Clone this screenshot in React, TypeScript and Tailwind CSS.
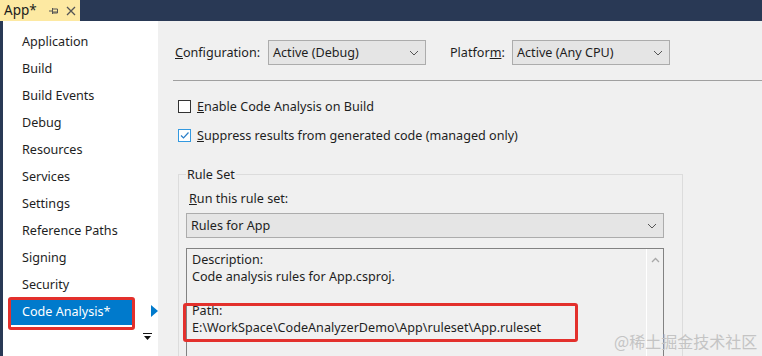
import React from "react";

const navItems = [
  "Application",
  "Build",
  "Build Events",
  "Debug",
  "Resources",
  "Services",
  "Settings",
  "Reference Paths",
  "Signing",
  "Security",
  "Code Analysis*",
];

const Chevron = () => (
  <svg width="10" height="6" viewBox="0 0 10 6" className="shrink-0">
    <path d="M1 1 L5 5 L9 1" fill="none" stroke="#555" strokeWidth="1" />
  </svg>
);

const Dropdown = ({ value, width }: { value: string; width: string }) => (
  <div className={`${width} h-[25px] flex items-center justify-between pl-[4px] pr-[6px] bg-[#e5e5e5] border border-[#acacac] text-[#1e1e1e]`}>
    <span>{value}</span>
    <Chevron />
  </div>
);

const Checkbox = ({ checked }: { checked?: boolean }) =>
  checked ? (
    <div className="w-[13px] h-[13px] border border-[#3399e0] bg-white flex items-center justify-center">
      <svg width="11" height="11" viewBox="0 0 11 11">
        <path d="M2 5.5 L4.5 8 L9.5 2.5" fill="none" stroke="#2a7fc9" strokeWidth="1.2" />
      </svg>
    </div>
  ) : (
    <div className="w-[13px] h-[13px] border border-[#333] bg-white" />
  );

export default function App() {
  return (
    <div className="relative w-[762px] h-[356px] overflow-hidden flex flex-col bg-[#f0f0f0] text-[12.6px] leading-[17px] text-[#1e1e1e] font-['Noto_Sans','Noto_Sans_CJK_SC',sans-serif]">
      {/* document tab bar */}
      <div className="h-[21px] bg-[#293955] flex shrink-0">
        <div className="w-[80px] bg-[#fde9a2] flex items-center pl-[4px] text-[#1b1b1b]">
          <span className="text-[13.5px]">App*</span>
          <svg width="10" height="8" viewBox="0 0 10 8" className="ml-[12px]">
            <path d="M0 4 H3 M3.5 1 V7 M3.5 2 H8.5 V6 H3.5 M3.5 5 H8.5" fill="none" stroke="#555" strokeWidth="1" />
          </svg>
          <svg width="10" height="10" viewBox="0 0 10 10" className="ml-[7px]">
            <path d="M1 1 L9 9 M9 1 L1 9" fill="none" stroke="#555" strokeWidth="1.3" />
          </svg>
        </div>
      </div>

      <div className="flex flex-1">
        {/* sidebar */}
        <div className="relative w-[158px] bg-white border-l-[3px] border-[#293955] pt-[7px] flex flex-col">
          {navItems.map((item) => {
            const selected = item === "Code Analysis*";
            return (
              <div key={item} className="relative h-[27px] ml-[7px] flex items-center">
                <div
                  className={
                    selected
                      ? "w-[122px] h-full flex items-center pl-[12px] bg-[#007acc] text-white"
                      : "pl-[12px]"
                  }
                >
                  {item}
                </div>
                {selected && (
                  <svg width="7" height="12" viewBox="0 0 7 12" className="absolute right-0 top-[7px]">
                    <path d="M0 0 L7 6 L0 12 Z" fill="#007acc" />
                  </svg>
                )}
              </div>
            );
          })}
          <svg width="9" height="8" viewBox="0 0 9 8" className="absolute left-[140px] top-[312px]">
            <path d="M0 0.5 H9" stroke="#111" strokeWidth="1" />
            <path d="M1 3 H8 L4.5 7 Z" fill="#111" />
          </svg>
        </div>

        {/* main panel */}
        <div className="flex-1 pt-[19px] pl-[15px]">
          <div className="flex items-center pl-[2px]">
            <span className="w-[93px]">
              <u>C</u>onfiguration:
            </span>
            <Dropdown value="Active (Debug)" width="w-[158px]" />
            <span className="ml-[24px] w-[62px]">
              Platfor<u>m</u>:
            </span>
            <Dropdown value="Active (Any CPU)" width="w-[158px]" />
          </div>

          <div className="mt-[15px] border-t border-[#a0a0a0]" />

          <div className="mt-[17px] flex items-center pl-[5px] gap-[6px]">
            <Checkbox />
            <span>
              <u>E</u>nable Code Analysis on Build
            </span>
          </div>
          <div className="mt-[12px] flex items-center pl-[5px] gap-[6px]">
            <Checkbox checked />
            <span>
              <u>S</u>uppress results from generated code (managed only)
            </span>
          </div>

          <fieldset className="mt-[22px] ml-[5px] w-[505px] h-[200px] border border-[#dcdcdc] px-[7px]">
            <legend className="px-[1px] leading-[17px]">Rule Set</legend>
            <div className="mt-[7px] pl-[3px]">
              <u>R</u>un this rule set:
            </div>
            <div className="mt-[6px]">
              <Dropdown value="Rules for App" width="w-[478px]" />
            </div>
            <div className="mt-[10px] w-[478px] h-[120px] border border-[#828282] flex">
              <div className="flex-1 pl-[5px] pt-[2px]">
                <div>Description:</div>
                <div>Code analysis rules for App.csproj.</div>
                <div className="h-[17px]" />
                <div>Path:</div>
                <div>E:\WorkSpace\CodeAnalyzerDemo\App\ruleset\App.ruleset</div>
              </div>
              <div className="w-[17px] border-l border-white flex justify-center pt-[8px]">
                <svg width="9" height="6" viewBox="0 0 9 6">
                  <path d="M1 5 L4.5 1.5 L8 5" fill="none" stroke="#a8a8a8" strokeWidth="1.3" />
                </svg>
              </div>
            </div>
          </fieldset>
        </div>
      </div>

      {/* annotations */}
      <div className="absolute left-[8px] top-[297px] w-[127px] h-[33px] border-[3px] border-[#e3302c] rounded-[3px]" />
      <div className="absolute left-[183px] top-[303px] w-[395px] h-[39px] border-[3px] border-[#e3302c] rounded-[3px]" />
      <div className="absolute left-[614px] top-[331px] text-[16px] leading-[20px] text-[#c4c4c4] font-['Noto_Sans_CJK_SC',sans-serif]">
        @稀土掘金技术社区
      </div>
    </div>
  );
}
